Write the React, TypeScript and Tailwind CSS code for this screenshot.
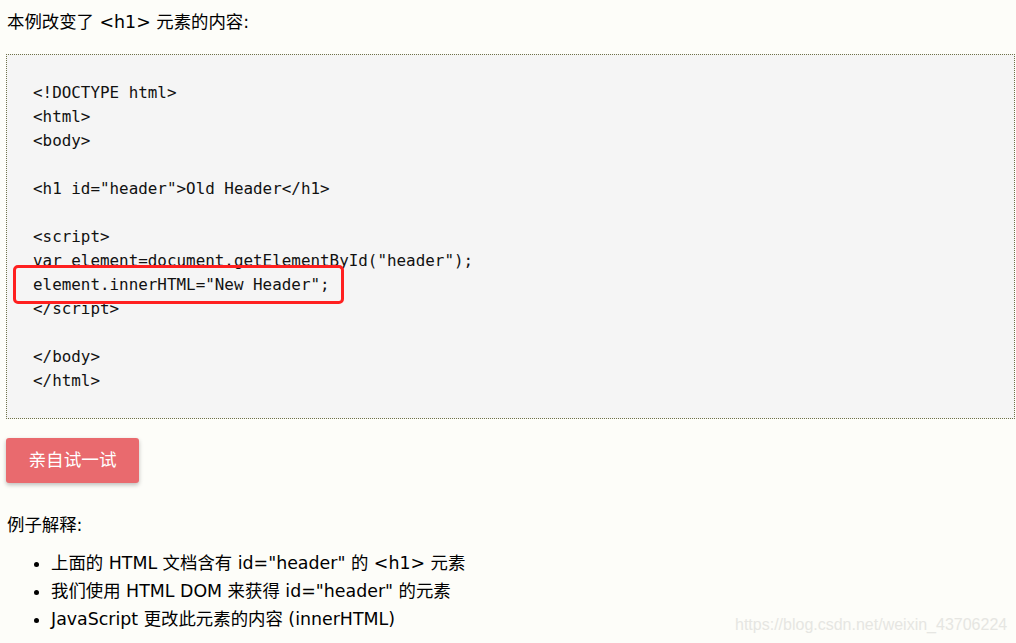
import React from "react";

const cjk = '"DejaVu Sans", "Noto Sans CJK SC", sans-serif';
const mono = '"DejaVu Sans Mono", "Liberation Mono", "Noto Sans CJK SC", monospace';

const code = [
  "<!DOCTYPE html>",
  "<html>",
  "<body>",
  "",
  '<h1 id="header">Old Header</h1>',
  "",
  "<script>",
  'var element=document.getElementById("header");',
  'element.innerHTML="New Header";',
  "</script>",
  "",
  "</body>",
  "</html>",
];

export default function App() {
  return (
    <div
      className="w-[1016px] h-[643px] bg-[#fdfdf9] text-black overflow-hidden relative"
      style={{ fontFamily: cjk }}
    >
      <p className="pl-[7px] pt-[10px] text-[17.4px] leading-[24px]">本例改变了 &lt;h1&gt; 元素的内容:</p>
      <div className="relative ml-[6px] mr-[1px] mt-[20px] h-[365px] border border-dotted border-[#6f7248] bg-[#f5f5f5] pl-[26px] pt-[26px]">
        {code.map((l, i) => (
          <div
            key={i}
            className="h-[24px] leading-[24px] text-[15.9px] whitespace-pre text-[#111]"
            style={{ fontFamily: mono }}
          >
            {l}
          </div>
        ))}
        <div className="absolute left-[6px] top-[210px] w-[331px] h-[39px] border-[3px] border-[#ff2020] rounded-[5px]" />
      </div>
      <div className="ml-[6px] mt-[19px] w-[133px] h-[45px] rounded-[3px] bg-[#e96a6e] shadow-[0_2px_4px_rgba(0,0,0,0.25)] flex items-center justify-center text-white text-[17.6px]">
        亲自试一试
      </div>
      <p className="pl-[7px] mt-[30px] text-[17.4px] leading-[24px]">例子解释:</p>
      <ul className="mt-[12px] pl-[51px] list-disc text-[17.4px] leading-[28px]">
        <li>上面的 HTML 文档含有 id="header" 的 &lt;h1&gt; 元素</li>
        <li>我们使用 HTML DOM 来获得 id="header" 的元素</li>
        <li>JavaScript 更改此元素的内容 (innerHTML)</li>
      </ul>
      <div
        className="absolute left-[735px] top-[613px] text-[16px] text-[#e6e6e2]"
        style={{ fontFamily: '"Liberation Sans", Arial, sans-serif' }}
      >
        https://blog.csdn.net/weixin_43706224
      </div>
    </div>
  );
}
